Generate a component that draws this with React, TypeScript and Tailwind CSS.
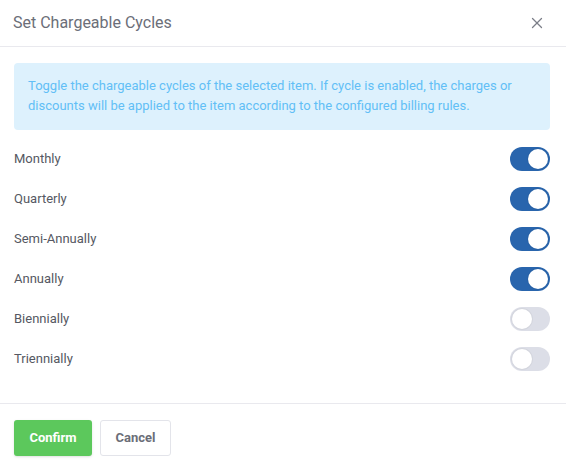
import { useState } from 'react';
import { X } from 'lucide-react';

const initialCycles = [
  { name: 'Monthly', on: true },
  { name: 'Quarterly', on: true },
  { name: 'Semi-Annually', on: true },
  { name: 'Annually', on: true },
  { name: 'Biennially', on: false },
  { name: 'Triennially', on: false },
];

function Toggle({ on, onChange }: { on: boolean; onChange: () => void }) {
  return (
    <button
      type="button"
      onClick={onChange}
      className={
        'relative w-10 h-6 rounded-full flex items-center px-[2px] transition-colors ' +
        (on ? 'bg-[#2965ad] justify-end' : 'bg-[#dcdee7] justify-start')
      }
    >
      <span className="size-5 rounded-full bg-white shadow-[0_0_0_1px_rgba(0,0,0,0.04)]" />
    </button>
  );
}

export default function App() {
  const [cycles, setCycles] = useState(initialCycles);

  const flip = (i: number) =>
    setCycles(cs => cs.map((c, j) => (j === i ? { ...c, on: !c.on } : c)));

  return (
    <div className="w-[566px] h-[471px] bg-white font-['Roboto',sans-serif] flex flex-col">
      <div className="h-[47px] pl-[13px] pr-[20px] flex items-center justify-between border-b border-[#e9e9ee]">
        <span className="text-[16px] text-[#6b6e78]">Set Chargeable Cycles</span>
        <X className="size-[18px] text-[#7b7e88]" strokeWidth={1.7} />
      </div>

      <div className="pl-[14px] pr-[16px] pt-[16px] pb-[24px] border-b border-[#e9e9ee]">
        <div className="bg-[#ddf1fd] rounded-[4px] px-[14px] pt-[13px] pb-[14px] text-[13px] leading-[20px] text-[#62bff6]">
          Toggle the chargeable cycles of the selected item. If cycle is enabled, the charges or
          discounts will be applied to the item according to the configured billing rules.
        </div>
        <div className="mt-[9px] flex flex-col">
          {cycles.map((c, i) => (
            <div key={c.name} className="h-10 flex items-center justify-between">
              <span className="text-[13px] text-[#555862]">{c.name}</span>
              <Toggle on={c.on} onChange={() => flip(i)} />
            </div>
          ))}
        </div>
      </div>

      <div className="px-[14px] pt-[16px] flex gap-2">
        <button className="h-9 w-[78px] rounded-[3px] bg-[#5cc85c] text-white text-[13px] font-bold shadow-sm">
          Confirm
        </button>
        <button className="h-9 w-[71px] rounded-[3px] border border-[#e3e4ea] bg-white text-[#6b6e78] text-[13px] font-bold">
          Cancel
        </button>
      </div>
    </div>
  );
}
